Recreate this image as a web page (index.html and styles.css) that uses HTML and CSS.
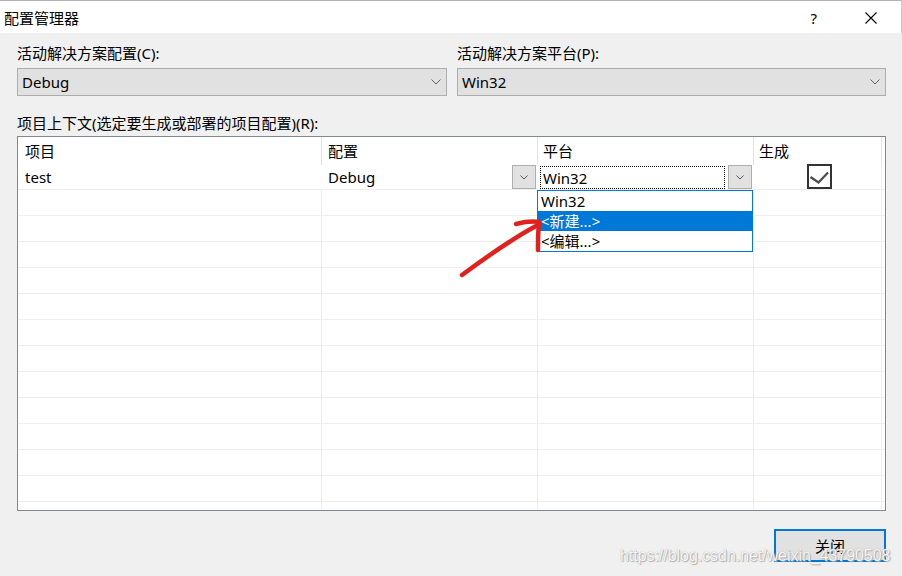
FILE: index.html
```html
<!DOCTYPE html>
<html lang="zh-CN">
<head>
<meta charset="utf-8">
<title>配置管理器</title>
<link rel="stylesheet" href="styles.css">
</head>
<body>
<div class="window">
  <header class="titlebar">
    <span class="title">配置管理器</span>
    <div class="caption-btns">
      <span class="help">?</span>
      <svg class="close-x" width="12" height="12" viewBox="0 0 12 12"><path d="M0.5 0.5L11.5 11.5M11.5 0.5L0.5 11.5" stroke="#000" stroke-width="1.1" fill="none"/></svg>
    </div>
  </header>
  <main class="content">
    <div class="combos">
      <div class="field">
        <div class="label">活动解决方案配置(C):</div>
        <div class="combo"><span>Debug</span><svg class="chev" width="10" height="6" viewBox="0 0 10 6"><polyline points="0.5,0.5 5,5 9.5,0.5" fill="none" stroke="#606060" stroke-width="1"/></svg></div>
      </div>
      <div class="field">
        <div class="label">活动解决方案平台(P):</div>
        <div class="combo"><span>Win32</span><svg class="chev" width="10" height="6" viewBox="0 0 10 6"><polyline points="0.5,0.5 5,5 9.5,0.5" fill="none" stroke="#606060" stroke-width="1"/></svg></div>
      </div>
    </div>
    <div class="label ctx-label">项目上下文(选定要生成或部署的项目配置)(R):</div>
    <div class="grid-wrap">
      <div class="grid">
        <div class="row head">
          <div class="cell c1">项目</div>
          <div class="cell c2">配置</div>
          <div class="cell c3">平台</div>
          <div class="cell c4">生成</div>
          <div class="cell c5"></div>
        </div>
        <div class="row first">
          <div class="cell c1">test</div>
          <div class="cell c2 split"><span>Debug</span><span class="mini-btn"><svg width="8" height="5" viewBox="0 0 8 5"><polyline points="0.5,0.5 4,4 7.5,0.5" fill="none" stroke="#555" stroke-width="1"/></svg></span></div>
          <div class="cell c3 split"><span class="focus">Win32</span><span class="mini-btn"><svg width="8" height="5" viewBox="0 0 8 5"><polyline points="0.5,0.5 4,4 7.5,0.5" fill="none" stroke="#555" stroke-width="1"/></svg></span></div>
          <div class="cell c4 center"><span class="checkbox"><svg width="21" height="21" viewBox="0 0 21 21"><polyline points="1.5,11 9.5,16.5 19,6.5" fill="none" stroke="#4d4d4d" stroke-width="2.3"/></svg></span></div>
          <div class="cell c5"></div>
        </div>
        <div class="row body"><div class="cell c1"></div><div class="cell c2"></div><div class="cell c3"></div><div class="cell c4"></div><div class="cell c5"></div></div>
        <div class="row body"><div class="cell c1"></div><div class="cell c2"></div><div class="cell c3"></div><div class="cell c4"></div><div class="cell c5"></div></div>
        <div class="row body"><div class="cell c1"></div><div class="cell c2"></div><div class="cell c3"></div><div class="cell c4"></div><div class="cell c5"></div></div>
        <div class="row body"><div class="cell c1"></div><div class="cell c2"></div><div class="cell c3"></div><div class="cell c4"></div><div class="cell c5"></div></div>
        <div class="row body"><div class="cell c1"></div><div class="cell c2"></div><div class="cell c3"></div><div class="cell c4"></div><div class="cell c5"></div></div>
        <div class="row body"><div class="cell c1"></div><div class="cell c2"></div><div class="cell c3"></div><div class="cell c4"></div><div class="cell c5"></div></div>
        <div class="row body"><div class="cell c1"></div><div class="cell c2"></div><div class="cell c3"></div><div class="cell c4"></div><div class="cell c5"></div></div>
        <div class="row body"><div class="cell c1"></div><div class="cell c2"></div><div class="cell c3"></div><div class="cell c4"></div><div class="cell c5"></div></div>
        <div class="row body"><div class="cell c1"></div><div class="cell c2"></div><div class="cell c3"></div><div class="cell c4"></div><div class="cell c5"></div></div>
        <div class="row body"><div class="cell c1"></div><div class="cell c2"></div><div class="cell c3"></div><div class="cell c4"></div><div class="cell c5"></div></div>
        <div class="row body"><div class="cell c1"></div><div class="cell c2"></div><div class="cell c3"></div><div class="cell c4"></div><div class="cell c5"></div></div>
        <div class="row body"><div class="cell c1"></div><div class="cell c2"></div><div class="cell c3"></div><div class="cell c4"></div><div class="cell c5"></div></div>
        <div class="row filler"><div class="cell c1"></div><div class="cell c2"></div><div class="cell c3"></div><div class="cell c4"></div><div class="cell c5"></div></div>
      </div>
      <ul class="dropdown">
        <li>Win32</li>
        <li class="selected">&lt;新建...&gt;</li>
        <li>&lt;编辑...&gt;</li>
      </ul>
    </div>
    <div class="footer"><button class="btn-close">关闭</button></div>
  </main>
  <svg class="arrow" width="902" height="576" viewBox="0 0 902 576">
    <path d="M462 275 C 485 258, 510 240, 536 226" fill="none" stroke="#e2211c" stroke-width="4.5" stroke-linecap="round"/>
    <path d="M516 224 C 524 222, 532 221, 539 222 C 538 232, 538 241, 538 250" fill="none" stroke="#e2211c" stroke-width="4.5" stroke-linecap="round" stroke-linejoin="round"/>
  </svg>
  <div class="watermark">https://blog.csdn.net/weixin_43790508</div>
</div>
</body>
</html>
```

FILE: styles.css
```css
* { box-sizing: border-box; }

html, body {
  margin: 0;
  padding: 0;
}

body {
  width: 902px;
  height: 576px;
  overflow: hidden;
  background: #f0f0f0;
  font-family: "Noto Sans", "Noto Sans CJK SC", sans-serif;
  font-size: 15px;
  color: #000;
}

.window {
  position: relative;
  width: 902px;
  height: 576px;
  background: #f0f0f0;
}

.titlebar {
  height: 33px;
  background: #fff;
  border-top: 1px solid #b4b4b4;
  border-right: 1px solid #c8c8c8;
  display: flex;
  align-items: center;
  padding-left: 4px;
  padding-right: 24px;
}

.title {
  line-height: 20px;
  margin-top: 1px;
}

.caption-btns {
  margin-left: auto;
  display: flex;
  align-items: center;
  gap: 48px;
}

.help {
  font-size: 15px;
  line-height: 20px;
  margin-top: 1px;
}

.close-x {
  display: block;
  margin-top: 2px;
}

.content {
  padding: 0 16px 0 17px;
}

.combos {
  display: grid;
  grid-template-columns: 430px 429px;
  column-gap: 10px;
  margin-top: 10px;
}

.label {
  line-height: 20px;
  height: 20px;
  white-space: nowrap;
}

.combo {
  margin-top: 5px;
  height: 28px;
  background: #e1e1e1;
  border: 1px solid #adadad;
  display: flex;
  align-items: center;
  justify-content: space-between;
  padding: 0 5px 0 4px;
  line-height: 20px;
}

.chev { display: block; }

.ctx-label {
  margin-top: 17px;
}

.grid-wrap {
  position: relative;
  margin-top: 3px;
  width: 869px;
}

.grid {
  width: 869px;
  height: 375px;
  background: #fff;
  border: 1px solid #828790;
  display: flex;
  flex-direction: column;
}

.row {
  display: flex;
  flex: none;
}

.cell {
  flex: none;
  height: 100%;
  border-right: 1px solid #e8eef6;
  line-height: 20px;
  display: flex;
  align-items: center;
  white-space: nowrap;
}

.c1 { width: 304px; padding-left: 7px; }
.c2 { width: 216px; padding-left: 6px; }
.c3 { width: 216px; padding-left: 5px; }
.c4 { width: 128px; padding-left: 5px; }
.c5 { width: 3px; border-right: none; }

.head { height: 28px; }
.head .cell { border-right-color: #e3e3e3; }
.head .c5 { border-right: none; }

.first {
  height: 25px;
  border-bottom: 1px solid #eeeeee;
}
.first .cell { border-right-color: transparent; }
.first .c4 { border-right-color: #e8eef6; }

.body {
  height: 26px;
  border-bottom: 1px solid #eeeeee;
}

.filler {
  flex: 1;
}

.split {
  justify-content: space-between;
}
.first .c2 { padding-right: 1px; }
.first .c3 { padding-left: 2px; padding-right: 1px; }

.mini-btn {
  width: 24px;
  height: 24px;
  background: #e1e1e1;
  border: 1px solid #adadad;
  display: flex;
  align-items: center;
  justify-content: center;
}
.mini-btn svg { display: block; }

.focus {
  width: 185px;
  height: 23px;
  margin-top: 1px;
  border: 1px dotted #000;
  padding-left: 2px;
  display: flex;
  align-items: center;
  margin-right: 3px;
}

.center {
  justify-content: center;
  padding-left: 0;
}

.checkbox {
  width: 25px;
  height: 25px;
  margin-top: -1px;
  margin-left: 3px;
  border: 2px solid #333;
  background: #fff;
  display: flex;
  align-items: center;
  justify-content: center;
}
.checkbox svg { display: block; }

.dropdown {
  position: absolute;
  left: 520px;
  top: 54px;
  width: 216px;
  height: 62px;
  margin: 0;
  padding: 0;
  list-style: none;
  background: #fff;
  border: 1px solid #0078d7;
}

.dropdown li {
  height: 20px;
  line-height: 20px;
  padding-left: 3px;
  white-space: nowrap;
}

.dropdown li.selected {
  background: #0078d7;
  color: #fff;
}

.footer {
  display: flex;
  justify-content: flex-end;
  margin-top: 18px;
}

.btn-close {
  width: 112px;
  height: 33px;
  background: #e1e1e1;
  border: 2px solid #0078d7;
  font-family: "Noto Sans CJK SC", sans-serif;
  font-size: 15px;
  color: #000;
  padding: 0;
}

.arrow {
  position: absolute;
  left: 0;
  top: 0;
  pointer-events: none;
}

.watermark {
  position: absolute;
  left: 620px;
  top: 546px;
  font-family: "Liberation Sans", Arial, sans-serif;
  font-size: 15.9px;
  line-height: 20px;
  color: rgba(255, 255, 255, 0.92);
  text-shadow: 0 0 1px #9a9a9a, 1px 1px 1px #b0b0b0;
  white-space: nowrap;
  pointer-events: none;
}
```
